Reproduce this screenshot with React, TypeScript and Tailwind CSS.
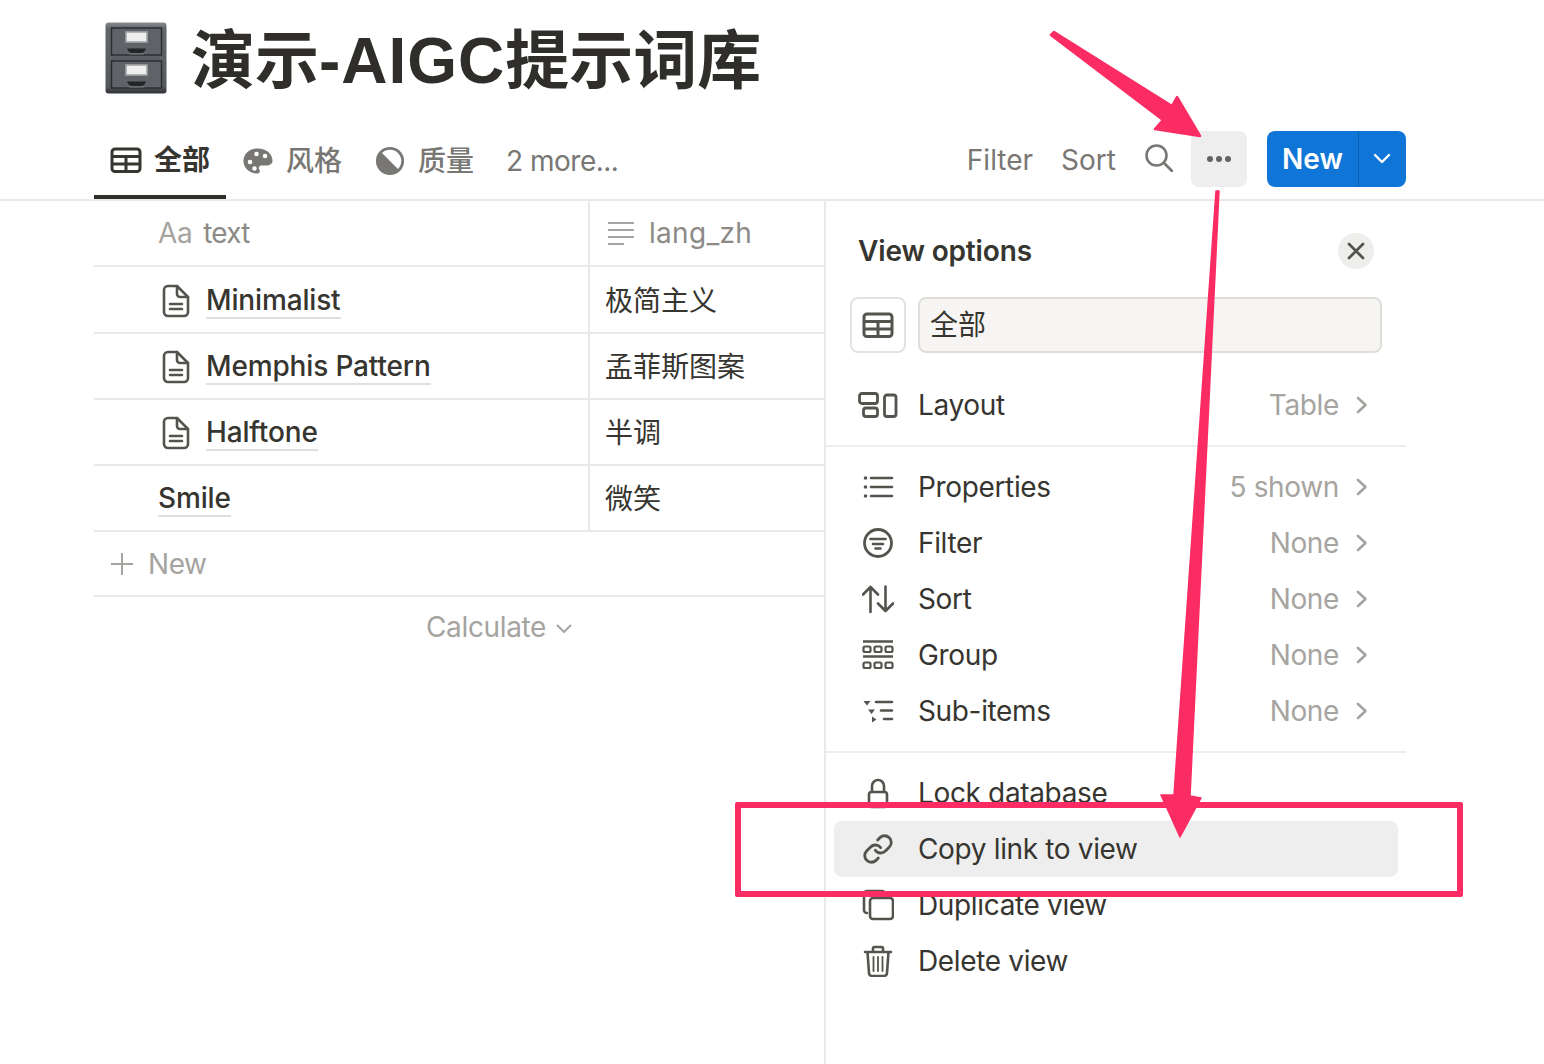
import React from 'react';
import { Link } from 'lucide-react';

const sans = 'font-["Inter","Noto_Sans_CJK_SC",sans-serif]';

const Svg = ({ className, vb = '0 0 32 32', children }: { className?: string; vb?: string; children: React.ReactNode }) => (
  <svg viewBox={vb} fill="none" stroke="currentColor" strokeWidth={2.6} strokeLinecap="round" strokeLinejoin="round" className={className}>
    {children}
  </svg>
);

const TableIcon = ({ className }: { className?: string }) => (
  <Svg className={className}>
    <rect x="2" y="5" width="28" height="22.500" rx="3" strokeWidth="3" />
    <path d="M2 12.500h28M2 20h28M16 12.500V27" strokeWidth="3" strokeLinecap="butt" />
  </Svg>
);

const Cabinet = () => (
  <svg viewBox="0 0 62 72" className="w-[62px] h-[72px]">
    <defs>
      <linearGradient id="cab" x1="0" y1="0" x2="0" y2="1">
        <stop offset="0" stopColor="#8a8d91" />
        <stop offset="0.08" stopColor="#63666a" />
        <stop offset="0.9" stopColor="#55585c" />
        <stop offset="1" stopColor="#2f3134" />
      </linearGradient>
    </defs>
    <rect x="0.5" y="0.5" width="61" height="71" rx="3" fill="url(#cab)" />
    <rect x="6.500" y="6" width="50" height="27" fill="#5f6266" stroke="#2a2c2f" strokeWidth="1.400" />
    <rect x="6.500" y="39" width="50" height="27" fill="#5f6266" stroke="#2a2c2f" strokeWidth="1.400" />
    <rect x="21" y="10" width="21" height="10" fill="#eeeeee" stroke="#a3a5a8" strokeWidth="1.600" />
    <rect x="21" y="43" width="21" height="10" fill="#eeeeee" stroke="#a3a5a8" strokeWidth="1.600" />
    <path d="M22 26.500h19c-1 3-3 4.500-5 4.500H27c-2 0-4-1.500-5-4.500zM22 59.500h19c-1 3-3 4.500-5 4.500H27c-2 0-4-1.500-5-4.500z" fill="#222426" />
    <path d="M24 32h15M24 65h15" stroke="#85888b" strokeWidth="0.800" />
  </svg>
);

const Palette = () => (
  <svg viewBox="0 0 32 32" className="w-[32px] h-[32px] text-[#787774]">
    <path
      fill="currentColor"
      fillRule="evenodd"
      d="M16 3.500C7.500 3.500 1.500 9 1.500 16S7.500 28.500 15 28.500c1.800 0 2.800-1 2.800-2.300 0-1.500-1-2-1-3.300 0-1.400 1.200-2.300 2.700-2.300H24c4 0 6.500-1.800 6.500-5C30.500 9 24 3.500 16 3.500zM14.500 11.300a2.300 2.300 0 1 1 0-4.600 2.300 2.300 0 0 1 0 4.600zM23 13.300a2.300 2.300 0 1 1 0-4.600 2.300 2.300 0 0 1 0 4.600zM8 19.300a2.300 2.300 0 1 1 0-4.600 2.300 2.300 0 0 1 0 4.600z"
    />
    <circle cx="12.500" cy="23.500" r="2.200" fill="#fff" />
  </svg>
);

const Quality = () => (
  <svg viewBox="0 0 32 32" className="w-[30px] h-[30px] text-[#787774]">
    <circle cx="16" cy="16" r="15" fill="currentColor" />
    <path d="M7.500 7.500A12 12 0 0 1 24.500 24.500Z" fill="#fff" />
  </svg>
);

const Chevron = () => (
  <Svg className="w-[14px] h-[20px] text-[#a5a4a0]" vb="0 0 14 20">
    <path d="M3 3l7.500 7L3 17" />
  </Svg>
);

const Doc = () => (
  <Svg className="w-[28px] h-[34px] text-[#55534e]" vb="0 0 28 34">
    <path d="M6 2h9l11 11v15a4 4 0 0 1-4 4H6a4 4 0 0 1-4-4V6a4 4 0 0 1 4-4z" />
    <path d="M15 2v8a3 3 0 0 0 3 3h8M8 20h12M8 25h12" />
  </Svg>
);

const menuIcons: Record<string, React.ReactNode> = {
  Layout: (
    <svg viewBox="0 0 40 26" fill="none" stroke="currentColor" strokeWidth="2.800" className="-ml-[4px] mt-[3px] w-[40px] h-[26px]">
      <rect x="1.500" y="1.500" width="18" height="10" rx="2.500" />
      <rect x="5.500" y="16" width="14" height="8.500" rx="2.500" />
      <rect x="26.500" y="3" width="11.500" height="21.500" rx="2.500" />
    </svg>
  ),
  Properties: (
    <Svg>
      <path d="M9 7h21M9 16h21M9 25h21" />
      <circle cx="3.500" cy="7" r="1.800" fill="currentColor" stroke="none" />
      <circle cx="3.500" cy="16" r="1.800" fill="currentColor" stroke="none" />
      <circle cx="3.500" cy="25" r="1.800" fill="currentColor" stroke="none" />
    </Svg>
  ),
  Filter: (
    <Svg>
      <circle cx="16" cy="16" r="13.500" strokeWidth="2.800" />
      <path d="M8.500 12h15M11 17h10M13.500 21.500h5" />
    </Svg>
  ),
  Sort: (
    <Svg>
      <path d="M8.500 29V4M1 11.500l7.500-7.500 7.500 7.500M23.500 3.500V28M16 20.500l7.500 7.500 7.500-7.500" />
    </Svg>
  ),
  Group: (
    <Svg>
      <path d="M1 2.500h30M1 17.500h30" strokeWidth="2.400" strokeLinecap="butt" />
      <rect x="1.500" y="7.500" width="7" height="5.500" rx="1.500" strokeWidth="2.200" />
      <rect x="12.500" y="7.500" width="7" height="5.500" rx="1.500" strokeWidth="2.200" />
      <rect x="23.500" y="7.500" width="7" height="5.500" rx="1.500" strokeWidth="2.200" />
      <rect x="1.500" y="23.500" width="7" height="5.500" rx="1.500" strokeWidth="2.200" />
      <rect x="12.500" y="23.500" width="7" height="5.500" rx="1.500" strokeWidth="2.200" />
      <rect x="23.500" y="23.500" width="7" height="5.500" rx="1.500" strokeWidth="2.200" />
    </Svg>
  ),
  'Sub-items': (
    <Svg>
      <path d="M14 7h16M19 15.500h11M22 24h8" />
      <path d="M1.500 6h7L5 10.500zM6 14.500h7l-3.500 4.500zM10 21.500v6l4.500-3z" fill="currentColor" stroke="none" />
    </Svg>
  ),
  'Lock database': (
    <Svg>
      <rect x="7" y="15" width="18" height="15" rx="2.500" />
      <path d="M10 15V9a6 6 0 0 1 12 0v6" />
    </Svg>
  ),
  'Copy link to view': <Link className="w-[32px] h-[32px]" strokeWidth={2.1} />,
  'Duplicate view': (
    <Svg>
      <path d="M5 24a3 3 0 0 1-3-3V5a3 3 0 0 1 3-3h15a3 3 0 0 1 3 3" />
      <rect x="8" y="9" width="23" height="21" rx="3" />
    </Svg>
  ),
  'Delete view': (
    <Svg>
      <path d="M3 7h26M11 7V3.500A1.500 1.500 0 0 1 12.500 2h7A1.500 1.500 0 0 1 21 3.500V7M5.500 7l1.500 21a3 3 0 0 0 3 3h12a3 3 0 0 0 3-3l1.500-21" />
      <path d="M11.500 12v14M16 12v14M20.500 12v14" strokeWidth="1.800" />
    </Svg>
  ),
};

const MenuRow = ({ label, value, active }: { label: string; value?: string; active?: boolean }) => (
  <div className={`h-[56px] mx-2 pl-7 pr-[29px] flex items-center rounded-lg tracking-[-0.35px] ${active ? 'bg-[#eeeeee]' : ''}`}>
    <span className="w-[32px] h-[32px] mr-[24px] text-[#55534e] shrink-0">{menuIcons[label]}</span>
    <span className="text-[28px] text-[#37352f] leading-none">{label}</span>
    {value && (
      <span className="ml-auto flex items-center gap-[16px] text-[28px] text-[#a5a4a0] leading-none">
        {value}
        <Chevron />
      </span>
    )}
  </div>
);

const Row = ({ name, zh, doc, h = 'h-[66px]' }: { name: string; zh: string; doc?: boolean; h?: string }) => (
  <div className={`${h} flex border-b-2 border-[#e9e9e7] text-[28px] text-[#37352f]`}>
    <div className={`w-[496px] pt-[2px] flex items-center border-r-2 border-[#e9e9e7] ${doc ? 'pl-[68px]' : 'pl-[64px]'}`}>
      {doc && <span className="mr-[16px] flex"><Doc /></span>}
      <span className="leading-[34px] border-b-2 border-[#dfdfdd] font-medium tracking-[-0.15px]">{name}</span>
    </div>
    <div className="pl-[15px] pt-[2px] flex items-center">{zh}</div>
  </div>
);

const App = () => {
  return (
    <div className={`relative w-[1544px] h-[1064px] overflow-hidden bg-white ${sans}`}>
      {/* title */}
      <div className="h-[122px] pl-[105px] pt-[22px] flex items-start">
        <Cabinet />
        <h1 className='ml-[24px] mt-[3px] text-[64px] font-bold leading-[72px] text-[#2f2e2a] font-["Liberation_Sans","Noto_Sans_CJK_SC",sans-serif]'>
          演示<span className="tracking-[1px]">-AIGC</span>提示词库
        </h1>
      </div>

      {/* tabs */}
      <div className="h-[79px] pl-[94px] flex border-b-2 border-[#e9e9e7] text-[28px]">
        <div className="w-[132px] h-[77px] pl-4 pt-[2px] flex items-center border-b-[4px] border-[#2f2e2a] text-[#37352f] font-semibold">
          <TableIcon className="w-[32px] h-[32px] mr-[12px]" />
          全部
        </div>
        <div className="pl-4 flex items-center text-[#787774] font-medium">
          <Palette />
          <span className="ml-[12px]">风格</span>
        </div>
        <div className="pl-[33px] flex items-center text-[#787774] font-medium">
          <Quality />
          <span className="ml-[13px]">质量</span>
        </div>
        <div className="pl-[32px] flex items-center text-[#787774] tracking-[-0.5px]">2 more...</div>
        <div className="ml-auto mr-[138px] flex items-center text-[#787774] pb-[3px]">
          <span className="pt-[2px]">Filter</span>
          <span className="ml-[28px] pt-[2px]">Sort</span>
          <Svg className="ml-[29px] w-[28px] h-[28px] -mt-[2px]" vb="0 0 28 28">
            <circle cx="11.500" cy="11.500" r="10" />
            <path d="M19 19l8 8" strokeWidth="2.800" />
          </Svg>
          <div className="ml-[18px] w-[56px] h-[56px] rounded-lg bg-[#eeeeee] flex items-center justify-center gap-[3px]">
            <span className="w-[6px] h-[6px] rounded-full bg-[#65635f]" />
            <span className="w-[6px] h-[6px] rounded-full bg-[#65635f]" />
            <span className="w-[6px] h-[6px] rounded-full bg-[#65635f]" />
          </div>
          <div className="ml-[20px] w-[139px] h-[56px] rounded-lg bg-[#0f75d6] flex items-center text-white font-semibold">
            <span className="w-[92px] h-full pb-[1px] flex items-center justify-center border-r border-[#0b5fb0]">New</span>
            <svg viewBox="0 0 18 12" fill="none" stroke="currentColor" strokeWidth="2.400" strokeLinecap="round" strokeLinejoin="round" className="ml-[14px] w-[18px] h-[12px]">
              <path d="M2 2l7 7 7-7" />
            </svg>
          </div>
        </div>
      </div>

      <div className="flex h-[863px]">
        {/* table */}
        <div className="ml-[94px] w-[730px]">
          <div className="h-[66px] flex border-b-2 border-[#e9e9e7] text-[28px] text-[#8b8a86]">
            <div className="w-[496px] pl-[64px] flex items-center border-r-2 border-[#e9e9e7]">
              <span className="text-[#a5a4a0] mr-[11px] tracking-[-0.4px]">Aa</span>
              <span className="tracking-[-0.8px]">text</span>
            </div>
            <div className="pl-[17px] flex items-center">
              <Svg className="w-[28px] h-[28px] mr-[14px] text-[#a5a4a0]" vb="0 0 28 28">
                <path d="M1 4h26M1 11h26M1 18h26M1 25h16" strokeWidth="2" strokeLinecap="butt" />
              </Svg>
              <span className="tracking-[0.3px]">lang_zh</span>
            </div>
          </div>
          <Row name="Minimalist" zh="极简主义" doc h="h-[67px]" />
          <Row name="Memphis Pattern" zh="孟菲斯图案" doc />
          <Row name="Halftone" zh="半调" doc />
          <Row name="Smile" zh="微笑" />
          <div className="h-[65px] pl-4 flex items-center border-b-2 border-[#e9e9e7] text-[28px] text-[#a5a4a0]">
            <Svg className="w-[24px] h-[24px] mr-[14px]" vb="0 0 24 24">
              <path d="M12 1v22M1 12h22" strokeWidth="2" strokeLinecap="butt" />
            </Svg>
            <span className="tracking-[-0.4px]">New</span>
          </div>
          <div className="h-[60px] pl-[332px] flex items-center text-[28px] text-[#a5a4a0] tracking-[-0.35px]">
            Calculate
            <svg viewBox="0 0 16 10" fill="none" stroke="currentColor" strokeWidth="2" strokeLinecap="round" strokeLinejoin="round" className="ml-[10px] mt-[3px] w-[16px] h-[10px]">
              <path d="M1.500 1.500 8 8l6.500-6.500" />
            </svg>
          </div>
        </div>

        {/* view options */}
        <div className="w-[582px] border-l-2 border-[#e9e9e7]">
          <div className="h-[96px] pt-[4px] pl-[32px] pr-[32px] flex items-center justify-between">
            <span className="text-[28px] font-semibold text-[#37352f] tracking-[-0.15px]">View options</span>
            <span className="w-[36px] h-[36px] rounded-full bg-[#eeeeec] flex items-center justify-center text-[#55534e]">
              <svg viewBox="0 0 18 18" fill="none" stroke="currentColor" strokeWidth="2.800" strokeLinecap="round" className="w-[18px] h-[18px]">
                <path d="M2 2l14 14M16 2 2 16" />
              </svg>
            </span>
          </div>
          <div className="pl-[24px] flex gap-3">
            <div className="w-[56px] h-[56px] rounded-lg border-2 border-[#e3e2e0] flex items-center justify-center text-[#55534e]">
              <TableIcon className="w-[32px] h-[32px]" />
            </div>
            <div className="w-[464px] h-[56px] rounded-lg border-2 border-[#dfdedb] bg-[#f6f5f3] pl-[10px] flex items-center text-[28px] text-[#37352f]">全部</div>
          </div>
          <div className="w-[580px] mt-[24px] pb-[12px] border-b-2 border-[#eeeeec]">
            <MenuRow label="Layout" value="Table" />
          </div>
          <div className="w-[580px] pt-[12px] pb-[12px] border-b-2 border-[#eeeeec]">
            <MenuRow label="Properties" value="5 shown" />
            <MenuRow label="Filter" value="None" />
            <MenuRow label="Sort" value="None" />
            <MenuRow label="Group" value="None" />
            <MenuRow label="Sub-items" value="None" />
          </div>
          <div className="w-[580px] pt-[12px]">
            <MenuRow label="Lock database" />
            <MenuRow label="Copy link to view" active />
            <MenuRow label="Duplicate view" />
            <MenuRow label="Delete view" />
          </div>
        </div>
      </div>

      {/* annotations */}
      <div className="absolute left-[735px] top-[802px] w-[728px] h-[95px] border-[6px] border-[#fb2c63] rounded-[2px]" />
      <svg viewBox="0 0 1544 1064" className="absolute inset-0 w-[1544px] h-[1064px] pointer-events-none">
        <path
          d="M1051 35 1054 32 1172 106 1177 97 1200 136 1155 129 1163 120Z"
          fill="#fb2c63"
          stroke="#fb2c63"
          strokeWidth="2.500"
          strokeLinejoin="round"
        />
        <path
          d="M1216 191H1219L1190 796 1201 798 1180 837 1161 795 1174 795Z"
          fill="#fb2c63"
          stroke="#fb2c63"
          strokeWidth="1.500"
          strokeLinejoin="round"
        />
      </svg>
    </div>
  );
};

export default App;
